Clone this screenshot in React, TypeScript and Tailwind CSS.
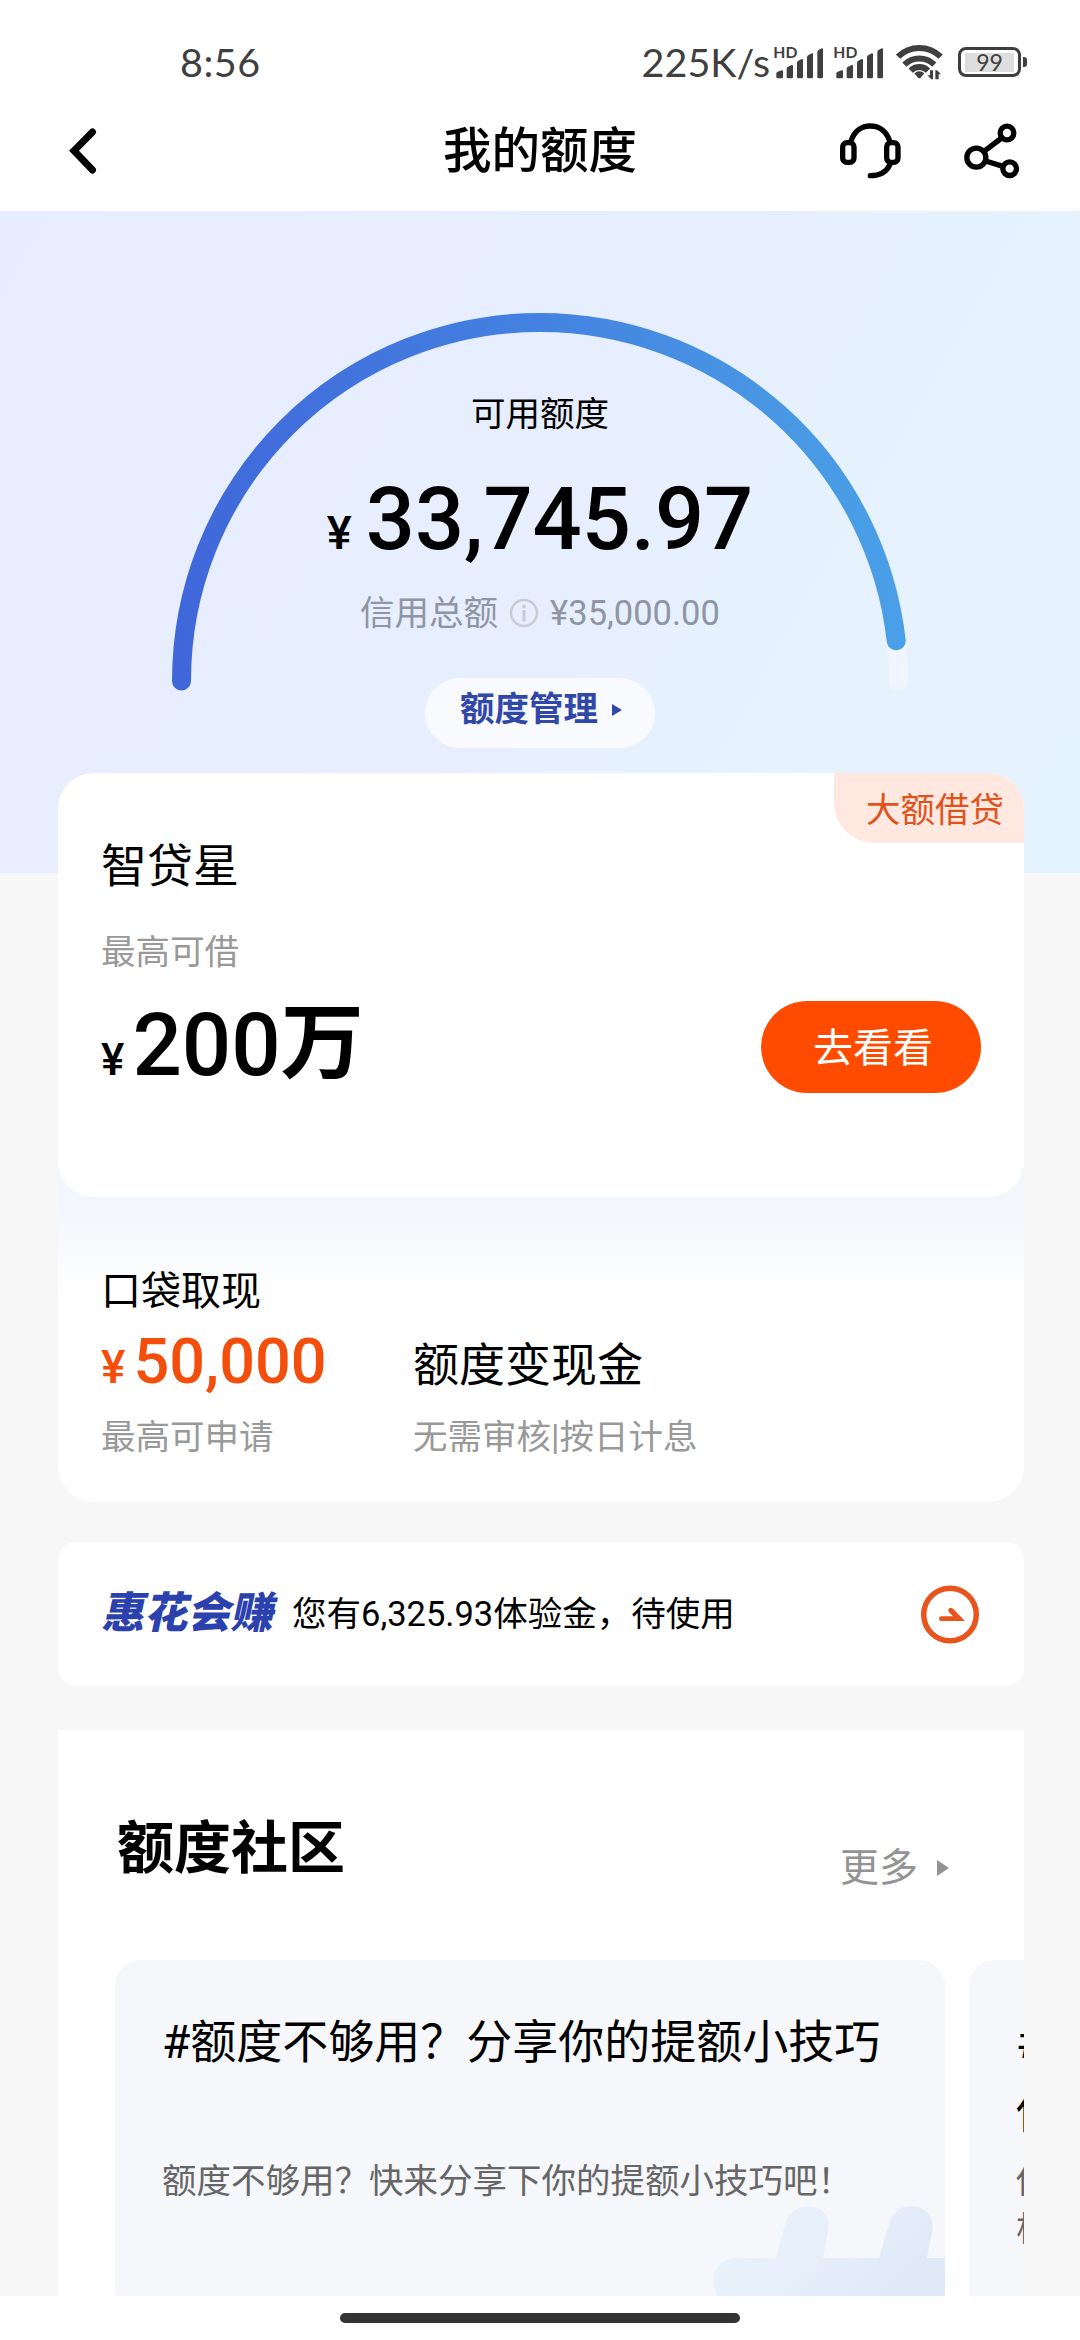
import React from "react";

/* ============================================================
   TYPES & DATA
============================================================ */

interface Topic {
  title: string[];
  desc: string[];
  hash: boolean;
}

const CREDIT = {
  total: 35000,
  available: 33745.97,
};

const TOPICS: Topic[] = [
  {
    title: ["#额度不够用？分享你的提额小技巧"],
    desc: ["额度不够用？快来分享下你的提额小技巧吧！"],
    hash: true,
  },
  {
    title: ["#", "你"],
    desc: ["你", "根"],
    hash: false,
  },
];

const money = (n: number) =>
  n.toLocaleString("en-US", { minimumFractionDigits: 2 });

/* ============================================================
   ICONS
============================================================ */

const SignalIcon = () => (
  <svg
    className="h-[33px] w-[51px] overflow-visible"
    viewBox="460 77 153 99"
    fill="#3f3f3f"
  >
    <text
      x="461"
      y="113"
      fontSize="46"
      fontWeight="700"
      fontFamily="Lato, sans-serif"
      textLength="72"
      lengthAdjust="spacingAndGlyphs"
    >
      HD
    </text>
    <path d="M470 159q0-3 4-5l12-4q4-1 4 3v17q0 4-4 4h-12q-4 0-4-4z" />
    <path d="M501 145q0-4 4-6l11-5q4-1 4 3v33q0 4-4 4h-11q-4 0-4-4z" />
    <path d="M532 127q0-4 4-6l10-5q4-1 4 3v51q0 4-4 4h-10q-4 0-4-4z" />
    <path d="M562 111q0-4 4-6l10-6q4-1 4 3v68q0 4-4 4h-10q-4 0-4-4z" />
    <path d="M593 95q0-4 4-6l9-5q4-1 4 3v83q0 4-4 4h-9q-4 0-4-4z" />
  </svg>
);

const WifiIcon = () => (
  <svg className="h-[36px] w-[47px]" viewBox="830 75 141 108" fill="none">
    <g stroke="#3f3f3f" strokeWidth="18">
      <path d="M836 113A91 91 0 0 1 964 113" />
      <path d="M855 137A64 64 0 0 1 945 137" />
      <path d="M874 155A37 37 0 0 1 926 155" />
    </g>
    <path d="M885 163q15-12 30 0l-11 13q-4 4-8 0z" fill="#3f3f3f" />
    <path
      d="M941 154v27h-5l-12-12h8v-15zM948 181v-27h5l12 12h-7v15z"
      fill="#3f3f3f"
    />
  </svg>
);

const Battery = ({ level }: { level: number }) => (
  <div className="flex items-center gap-[2px]">
    <div className="flex h-[30px] w-[63px] items-center justify-center rounded-[8px] border-3 border-[#3f3f3f]">
      <div className="flex h-[19px] w-[49px] items-center justify-center bg-[#dedede] font-['Lato','Noto_Sans_CJK_SC',sans-serif] text-[23px] leading-none text-[#3f3f3f]">
        {level}
      </div>
    </div>
    <div className="h-[10px] w-[4px] rounded-r-[3px] bg-[#3f3f3f]" />
  </div>
);

const BackIcon = () => (
  <svg className="h-[50px] w-[34px]" viewBox="0 0 34 50" fill="none">
    <path
      d="M27.500 6L9 24.800L27.500 44"
      stroke="#000"
      strokeWidth="7"
      strokeLinecap="round"
    />
  </svg>
);

const HeadsetIcon = () => (
  <svg
    className="h-[58px] w-[63px]"
    viewBox="656 303 189 174"
    fill="none"
    stroke="#000"
    strokeWidth="16"
    strokeLinecap="round"
  >
    <rect x="667" y="365" width="34" height="59" rx="13" />
    <rect x="799" y="365" width="34" height="59" rx="13" />
    <path d="M692 360C702 330 724 315 750 315S798 330 808 360" />
    <path d="M809 430C799 452 778 464 750 464" />
  </svg>
);

const ShareIcon = () => (
  <svg
    className="h-[58px] w-[58px]"
    viewBox="1027 303 174 174"
    fill="none"
    stroke="#000"
    strokeWidth="16"
  >
    <circle cx="1067" cy="410" r="28.500" />
    <circle cx="1159" cy="336" r="20.500" />
    <circle cx="1167" cy="443" r="20.500" />
    <path d="M1090 391L1143 351M1095 420L1147 436" />
  </svg>
);

const InfoIcon = () => (
  <svg className="h-[30px] w-[30px]" viewBox="0 0 30 30" fill="none">
    <circle cx="15" cy="15" r="13" stroke="#c8cbd2" strokeWidth="2.500" />
    <circle cx="15" cy="8.500" r="2" fill="#c8cbd2" />
    <path d="M15 12V23.500" stroke="#c8cbd2" strokeWidth="3" />
  </svg>
);

const GoIcon = () => (
  <svg className="h-[60px] w-[60px]" viewBox="0 0 60 60" fill="none">
    <circle cx="30" cy="30.500" r="26.300" stroke="#e8541c" strokeWidth="5.500" />
    <path
      d="M19 34.500q0-2.300 2.300-2.300h11.700l-4-4q-1.600-2 0-3.600t3.700 0L45 37H21.300q-2.300 0-2.300-2.500z"
      fill="#e8541c"
    />
  </svg>
);

const HashArt = () => (
  <svg
    className="absolute bottom-0 right-0 h-[92px] w-[234px]"
    viewBox="0 0 234 92"
  >
    <defs>
      <linearGradient id="hash" x1="0" y1="0" x2="1" y2="0.400">
        <stop offset="0" stopColor="#ebf2fb" />
        <stop offset="0.450" stopColor="#e7f0fa" />
        <stop offset="1" stopColor="#e0e9f7" />
      </linearGradient>
    </defs>
    <path
      fill="url(#hash)"
      d="M3 76C3 62 12 54 26 54H65L74 20C78 7 88 2 97 2C111 2 120 13 117 27L112 54H168L178 20C182 7 190 2 200 2C215 2 224 14 221 28L216 54H234V92H7C4 87 3 82 3 76Z"
    />
  </svg>
);

/* ============================================================
   STATUS BAR + HEADER
============================================================ */

const StatusBar = () => (
  <div className="flex h-[90px] items-center justify-between bg-white pl-[180px] pr-[53px] pt-[34px] font-['Lato','Noto_Sans_CJK_SC',sans-serif] text-[39.500px] leading-[56px] text-[#3f3f3f]">
    <span className="tracking-[0.5px]">8:56</span>
    <div className="flex items-center">
      <span className="mr-[3px]">225K/s</span>
      <SignalIcon />
      <span className="w-[9px]" />
      <SignalIcon />
      <span className="w-[12px]" />
      <WifiIcon />
      <span className="w-[15px]" />
      <Battery level={99} />
    </div>
  </div>
);

const Header = () => (
  <div className="grid h-[121px] grid-cols-[1fr_auto_1fr] items-center bg-white pl-[65px] pr-[59px]">
    <BackIcon />
    <h1 className="-ml-[6px] pt-[3px] text-[48.500px] font-medium leading-[60px]">
      我的额度
    </h1>
    <div className="flex items-center justify-end gap-[61px]">
      <HeadsetIcon />
      <ShareIcon />
    </div>
  </div>
);

/* ============================================================
   CREDIT GAUGE
============================================================ */

const Gauge = ({ ratio }: { ratio: number }) => (
  <svg
    className="absolute left-[160px] top-[90px] h-[400px] w-[760px]"
    viewBox="160 301 760 400"
    fill="none"
    strokeWidth="19"
    strokeLinecap="round"
  >
    <defs>
      <linearGradient id="gauge" x1="0" y1="0" x2="1" y2="0">
        <stop offset="0" stopColor="#4067da" />
        <stop offset="0.500" stopColor="#4382e0" />
        <stop offset="0.850" stopColor="#4998e4" />
        <stop offset="1" stopColor="#4a9fe8" />
      </linearGradient>
    </defs>
    <path
      d="M181.500 681A358.500 358.500 0 0 1 898.500 681"
      stroke="#f1f6fe"
    />
    <path
      d="M181.500 681A358.500 358.500 0 0 1 898.500 681"
      stroke="url(#gauge)"
      pathLength="100"
      strokeDasharray={`${ratio * 100} 200`}
    />
  </svg>
);

const Hero = () => (
  <div className="relative flex h-[662px] flex-col items-center bg-[linear-gradient(120deg,#e7edfe_0%,#e7eefe_50%,#e6f1fe_65%,#e5f3fe_100%)] pt-[183px]">
    <Gauge ratio={CREDIT.available / CREDIT.total} />
    <p className="text-[34.500px] leading-[40px]">可用额度</p>
    <p className="mt-[36px] flex items-baseline font-medium leading-[100px]">
      <span className="mr-[14px] text-[47px] leading-none">¥</span>
      <span className="text-[86.500px]">{money(CREDIT.available)}</span>
    </p>
    <p className="mt-[23px] flex items-center text-[34.500px] leading-[40px] text-[#8f95a3]">
      信用总额
      <span className="mx-[11px]">
        <InfoIcon />
      </span>
      ¥{money(CREDIT.total)}
    </p>
    <button className="mt-[45px] flex h-[70px] w-[230px] items-center gap-[14px] rounded-full bg-[#f8fafe] pb-[6px] pl-[35px] text-[34.500px] font-bold text-[#3148a8]">
      额度管理
      <svg className="h-[12px] w-[10px]" viewBox="0 0 10 12">
        <path d="M0 0L10 6L0 12Z" fill="#3148a8" />
      </svg>
    </button>
  </div>
);

/* ============================================================
   CARDS
============================================================ */

const LoanCard = () => (
  <section className="relative -mt-[100px] h-[424px] overflow-hidden rounded-[36px] bg-white pl-[43px] pr-[43px] pt-[63px]">
    <span className="absolute right-0 top-0 h-[70px] w-[190px] rounded-bl-[40px] bg-[#ffe8e0] pl-[32px] text-[34.500px] leading-[74px] text-[#e2531c]">
      大额借贷
    </span>
    <h2 className="text-[46px] leading-[60px]">智贷星</h2>
    <p className="mt-[36px] text-[34.500px] leading-[40px] text-[#999]">
      最高可借
    </p>
    <div className="mt-[23px] flex h-[100px] items-start justify-between">
      <p className="flex items-baseline font-medium leading-[100px]">
        <span className="mr-[8px] text-[44px] leading-none">¥</span>
        <span className="text-[87px]">200</span>
        <span className="-translate-y-[3px] text-[83px] font-bold leading-none">
          万
        </span>
      </p>
      <button className="mt-[6px] h-[92px] w-[220px] rounded-full bg-[#ff4b00] pl-[4px] pt-[4px] text-[40px] text-white">
        去看看
      </button>
    </div>
  </section>
);

const CashCard = () => (
  <section className="-mt-[36px] h-[341px] rounded-b-[36px] bg-[linear-gradient(180deg,#f2f6fb_0px,#f3f6fc_50px,#fff_135px)] pl-[43px] pt-[106px]">
    <h2 className="text-[40px] leading-[50px]">口袋取现</h2>
    <div className="mt-[14px] grid grid-cols-[312px_1fr] gap-y-[19px]">
      <p className="flex h-[67px] items-baseline font-medium leading-[62px] text-[#f34e0c]">
        <span className="mr-[8px] text-[46px] leading-none">¥</span>
        <span className="text-[63px]">50,000</span>
      </p>
      <h3 className="pt-[3px] text-[46px] leading-[62px]">额度变现金</h3>
      <p className="text-[34.500px] leading-[40px] text-[#999]">
        最高可申请
      </p>
      <p className="text-[34.500px] leading-[40px] text-[#999]">
        无需审核|按日计息
      </p>
    </div>
  </section>
);

const BonusBar = () => (
  <section className="mt-[40px] flex h-[144px] items-center rounded-[18px] bg-white pl-[46px] pr-[44px]">
    <span className="-skew-x-12 pb-[3px] text-[43px] font-black leading-[50px] text-[#2b41ae]">
      惠花会赚
    </span>
    <span className="ml-[16px] flex-1 text-[34.500px] leading-[50px]">
      您有6,325.93体验金，待使用
    </span>
    <GoIcon />
  </section>
);

/* ============================================================
   COMMUNITY
============================================================ */

const TopicCard = ({ topic }: { topic: Topic }) => (
  <article className="relative h-[336px] w-[830px] shrink-0 rounded-t-[26px] bg-[#f6f7fb] px-[47px] pt-[47px]">
    {topic.hash && <HashArt />}
    <h3 className="min-h-[140px] text-[46px] leading-[70px]">
      {topic.title.map((line) => (
        <span key={line} className="block whitespace-nowrap">
          {line}
        </span>
      ))}
    </h3>
    <div className="relative mt-[10px] text-[34.500px] leading-[48px] text-[#666]">
      {topic.desc.map((line) => (
        <span key={line} className="block whitespace-nowrap">
          {line}
        </span>
      ))}
    </div>
  </article>
);

const Community = () => (
  <section className="mt-[44px] h-[566px] overflow-hidden bg-white pl-[57px] pt-[84px]">
    <div className="flex h-[80px] justify-between pr-[75px]">
      <h2 className="pl-[2px] text-[57px] font-bold leading-[70px]">
        额度社区
      </h2>
      <a className="flex items-center pt-[28px] text-[39px] leading-[50px] text-[#939393]">
        更多
        <svg className="ml-[19px] h-[16px] w-[12px]" viewBox="0 0 12 16">
          <path d="M0 0L12 8L0 16Z" fill="#939393" />
        </svg>
      </a>
    </div>
    <div className="mt-[66px] flex gap-[24px]">
      {TOPICS.map((topic) => (
        <TopicCard key={topic.title[0]} topic={topic} />
      ))}
    </div>
  </section>
);

/* ============================================================
   MAIN APP
============================================================ */

export default function App() {
  return (
    <div className="flex h-[2340px] w-[1080px] flex-col overflow-hidden bg-[#f7f7f7] font-['Roboto','Noto_Sans_CJK_SC',sans-serif] text-black">
      <StatusBar />
      <Header />
      <Hero />
      <main className="ml-[58px] w-[966px]">
        <LoanCard />
        <CashCard />
        <BonusBar />
        <Community />
      </main>
      <div className="flex h-[44px] shrink-0 justify-center bg-white pt-[17px]">
        <div className="h-[10px] w-[400px] rounded-full bg-[#333]" />
      </div>
    </div>
  );
}
